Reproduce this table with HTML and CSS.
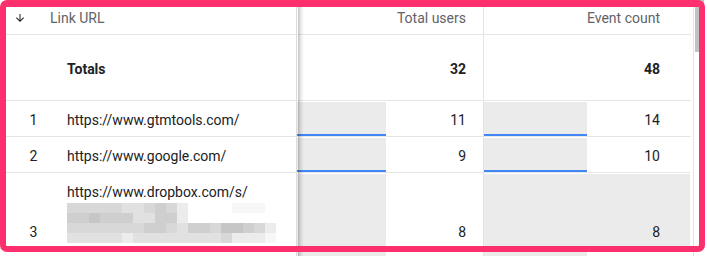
FILE: index.html
```html
<!DOCTYPE html>
<html>
<head>
<meta charset="utf-8">
<link rel="stylesheet" href="styles.css">
</head>
<body>
<div class="page">
  <div class="board">
    <div class="table">
      <div class="row head">
        <div class="c1 hcell">
          <svg class="sort" viewBox="0 0 24 24"><path d="M20 12l-1.41-1.41L13 16.17V4h-2v12.17l-5.58-5.59L4 12l8 8 8-8z"/></svg>
          <span>Link URL</span>
        </div>
        <div class="c2 hnum">Total users</div>
        <div class="c3 hnum">Event count</div>
      </div>
      <div class="row totals">
        <div class="c1"><span class="idx"></span><span class="url bold">Totals</span></div>
        <div class="c2 tnum bold">32</div>
        <div class="c3 tnum bold">48</div>
      </div>
      <div class="row data">
        <div class="c1"><span class="idx">1</span><span class="url">https://www.gtmtools.com/</span></div>
        <div class="c2 metric"><div class="bar" style="width:89px"></div><span class="val">11</span></div>
        <div class="c3 metric"><div class="bar" style="width:103px"></div><span class="val">14</span></div>
      </div>
      <div class="row data">
        <div class="c1"><span class="idx">2</span><span class="url">https://www.google.com/</span></div>
        <div class="c2 metric"><div class="bar" style="width:89px"></div><span class="val">9</span></div>
        <div class="c3 metric"><div class="bar" style="width:103px"></div><span class="val">10</span></div>
      </div>
      <div class="row data tall">
        <div class="c1 stack">
          <span class="idx">3</span>
          <div class="url block">
            <div>https://www.dropbox.com/s/</div>
            <div class="blur">
              <i class="c"></i><i class="c"></i><i class="c"></i><i class="c"></i><i class="c"></i><i class="d"></i><i class="d"></i><i class="c"></i><i class="b"></i><i class="c"></i><i class="e"></i><i class="w"></i><i class="w"></i><i class="w"></i><i class="w"></i><i class="f"></i><i class="f"></i><i class="f"></i><i class="w"></i>
              <i class="b"></i><i class="b"></i><i class="a"></i><i class="b"></i><i class="b"></i><i class="b"></i><i class="d"></i><i class="d"></i><i class="b"></i><i class="b"></i><i class="e"></i><i class="w"></i><i class="w"></i><i class="w"></i><i class="w"></i><i class="w"></i><i class="w"></i><i class="w"></i><i class="w"></i>
              <i class="c"></i><i class="c"></i><i class="c"></i><i class="c"></i><i class="c"></i><i class="c"></i><i class="c"></i><i class="b"></i><i class="b"></i><i class="c"></i><i class="d"></i><i class="b"></i><i class="b"></i><i class="c"></i><i class="a"></i><i class="a"></i><i class="b"></i><i class="c"></i><i class="e"></i>
              <i class="d"></i><i class="d"></i><i class="d"></i><i class="d"></i><i class="d"></i><i class="e"></i><i class="d"></i><i class="d"></i><i class="d"></i><i class="d"></i><i class="d"></i><i class="d"></i><i class="d"></i><i class="d"></i><i class="c"></i><i class="e"></i><i class="e"></i><i class="e"></i><i class="f"></i>
            </div>
          </div>
        </div>
        <div class="c2 metric"><div class="bar" style="width:89px"></div><span class="val">8</span></div>
        <div class="c3 metric"><div class="bar" style="width:206px"></div><span class="val">8</span></div>
      </div>
      <div class="row data">
        <div class="c1"></div>
        <div class="c2 metric"><div class="bar" style="width:89px"></div></div>
        <div class="c3 metric"><div class="bar" style="width:103px"></div></div>
      </div>
    </div>
    <div class="scroll"><div class="track"><div class="thumb"></div></div></div>
  </div>
  <div class="shade"></div>
  <div class="frame"></div>
</div>
</body>
</html>
```
FILE: styles.css
```css
* { box-sizing: border-box; }
html, body { margin: 0; padding: 0; background: #fff; }
body {
  font-family: Roboto, "Noto Sans", sans-serif;
  font-size: 14px;
  line-height: 20px;
  color: #202124;
}
.page {
  position: relative;
  width: 707px;
  height: 256px;
  overflow: hidden;
}
.board { display: flex; align-items: stretch; }
.table { width: 691px; }
.row {
  display: grid;
  grid-template-columns: 297px 187px 207px;
  border-bottom: 1px solid #e6e6e6;
}
.c1 { border-right: 1px solid #dadce0; display: flex; }
.c2 { border-right: 1px solid #e3e3e3; }
.head { height: 35px; }
.head > div { display: flex; align-items: center; padding-top: 2px; color: #5f6368; }
.sort { width: 12px; height: 12px; margin-left: 14px; margin-right: 24px; fill: #202124; }
.hnum { justify-content: flex-end; }
.head .c2 { padding-right: 17px; }
.head .c3 { padding-right: 31px; }
.totals { height: 66px; }
.totals > div { display: flex; align-items: center; padding-top: 3px; }
.tnum { justify-content: flex-end; }
.totals .c2 { padding-right: 17px; }
.totals .c3 { padding-right: 31px; }
.bold { font-weight: 700; }
.idx { width: 67px; flex: none; text-align: center; }
.data { height: 36px; }
.data .c1 { align-items: flex-end; padding-bottom: 6px; }
.data.tall { height: auto; }
.data .c1.stack { align-items: stretch; padding-bottom: 0; }
.stack .idx { align-self: flex-end; padding-bottom: 6px; }
.block { padding-top: 9px; padding-bottom: 5px; }
.blur {
  margin-top: 1px;
  display: grid;
  grid-template-columns: repeat(19, 11px);
  grid-auto-rows: 10px;
}
.blur i { display: block; }
.blur .a { background: #c6c6c6; }
.blur .b { background: #cfcfcf; }
.blur .c { background: #d8d8d8; }
.blur .d { background: #e1e1e1; }
.blur .e { background: #ececec; }
.blur .f { background: #f7f7f7; }
.blur .w { background: #ffffff; }
.metric { display: grid; }
.bar, .val { grid-area: 1 / 1; }
.bar {
  justify-self: start;
  margin-top: 1px;
  background: #ebebeb;
  border-bottom: 2px solid #4285f4;
}
.val { align-self: end; justify-self: end; padding-bottom: 6px; }
.c2 .val { padding-right: 17px; }
.c3 .val { padding-right: 31px; }
.scroll { width: 16px; padding-left: 2px; }
.track { height: 100%; border-left: 1px solid #e3e3e3; padding-left: 1px; }
.thumb { width: 9px; height: 52px; background: #c2c2c2; }
.shade {
  position: absolute;
  left: 297px;
  top: 0;
  width: 7px;
  height: 256px;
  background: linear-gradient(to right, rgba(0,0,0,0) 0, rgba(0,0,0,0) 1px, rgba(0,0,0,0.24) 1px, rgba(0,0,0,0.08) 4px, rgba(0,0,0,0) 7px);
}
.frame {
  position: absolute;
  left: 0;
  top: 0;
  width: 705px;
  height: 252px;
  border: 6px solid #fe2f6d;
  border-top-width: 7px;
  border-radius: 7px;
}
```
